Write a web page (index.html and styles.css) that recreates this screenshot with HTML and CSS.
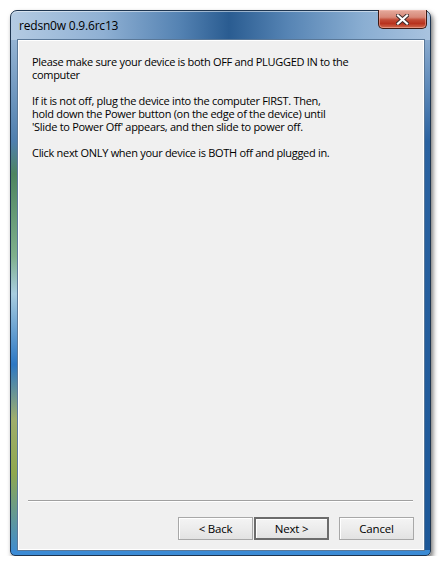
FILE: index.html
```html
<!DOCTYPE html>
<html lang="en">
<head>
    <meta charset="UTF-8">
    <title>redsn0w 0.9.6rc13</title>
    <link rel="stylesheet" href="styles.css">
</head>
<body>
    <div class="window">
        <!-- Title bar -->
        <div class="titlebar">
            <span class="title">redsn0w 0.9.6rc13</span>
            <div class="close-btn">
                <svg width="13" height="11" viewBox="0 0 13 11">
                    <path d="M2 1.5 L11 9.5 M11 1.5 L2 9.5" stroke="#3a2a2a" stroke-width="4" stroke-linecap="square"/>
                    <path d="M2 1.5 L11 9.5 M11 1.5 L2 9.5" stroke="#ffffff" stroke-width="2.2" stroke-linecap="square"/>
                </svg>
            </div>
        </div>

        <!-- Client area -->
        <div class="client">
            <div class="content">
                <p>Please make sure your device is both OFF and PLUGGED IN to the<br>
                computer</p>
                <p>If it is not off, plug the device into the computer FIRST. Then,<br>
                hold down the Power button (on the edge of the device) until<br>
                'Slide to Power Off' appears, and then slide to power off.</p>
                <p>Click next ONLY when your device is BOTH off and plugged in.</p>
            </div>

            <div class="separator"></div>

            <div class="buttons">
                <button class="btn">&lt; Back</button>
                <button class="btn btn-default">Next &gt;</button>
                <button class="btn btn-cancel">Cancel</button>
            </div>
        </div>
    </div>
</body>
</html>
```

FILE: styles.css
```css
/* Base */
:root {
    --client-bg: #f0f0f0;
    --frame-dark: #1e3550;
    --text: #000000;
}

body {
    margin: 0;
    background: #ffffff;
    font-family: 'Open Sans', 'Noto Sans', sans-serif;
    font-size: 11px;
    letter-spacing: -0.3px;
    color: var(--text);
}

/* Window frame */
.window {
    position: relative;
    margin: 10px 0 0 10px;
    width: 408px;
    height: 540px;
    border: 1px solid var(--frame-dark);
    border-radius: 7px 7px 5px 5px;
    padding: 0 5px 4px 6px;
    display: flex;
    flex-direction: column;
    background:
        linear-gradient(90deg, #b4cbe3 0%, #8fb0d3 22%, #5583b3 40%, #2a5c91 52%, #5684b4 66%, #8aaed2 84%, #a9c3df 100%) top / 100% 29px no-repeat,
        linear-gradient(#3b8bd5, #3b8bd5) bottom / 100% 5px no-repeat,
        linear-gradient(180deg, #a9c3de 0%, #4f7fae 24%, #4d8560 30%, #7fb08c 45%, #a8cde0 52%, #2d78c4 65%, #9fae6c 75%, #8fa84f 85%, #3b8bd5 100%) left / 6px 100% no-repeat,
        linear-gradient(180deg, #a6c0dc 0%, #2a62a0 24%, #1d5898 100%);
    box-shadow: 2px 3px 5px rgba(0, 0, 0, 0.55), inset 0 1px 0 rgba(255, 255, 255, 0.5);
}

.titlebar {
    height: 28px;
    display: flex;
    align-items: center;
    padding-left: 2px;
}

.title {
    font-size: 12px;
    letter-spacing: -0.2px;
    color: #000;
    margin-top: 0;
}

.close-btn {
    position: absolute;
    top: -1px;
    right: 3px;
    width: 47px;
    height: 18px;
    border: 1px solid #3d1a14;
    border-top: none;
    border-radius: 0 0 5px 5px;
    background: linear-gradient(180deg, #e4aa9c 0%, #d88878 40%, #c24a35 55%, #b8321e 75%, #d06a4e 100%);
    box-shadow: inset 0 0 0 1px rgba(255, 200, 190, 0.45);
    display: flex;
    justify-content: center;
    align-items: center;
}

/* Client area */
.client {
    flex: 1;
    display: flex;
    flex-direction: column;
    background: var(--client-bg);
    border: 1px solid #5a7898;
    box-shadow: inset 0 0 0 1px #ffffff;
}

.content {
    flex: 1;
    padding: 15px 14px 0 14px;
    line-height: 13px;
}

.content p {
    margin: 0 0 13px 0;
    white-space: nowrap;
}

.separator {
    height: 1px;
    margin: 0 11px 0 10px;
    background: #a0a0a0;
    border-bottom: 1px solid #ffffff;
}

.buttons {
    display: flex;
    justify-content: flex-end;
    padding: 15px 10px 10px 0;
}

.btn {
    width: 75px;
    height: 23px;
    margin: 0;
    font-family: inherit;
    font-size: 11.5px;
    letter-spacing: -0.2px;
    color: #000;
    border: 1px solid #a8a8a8;
    border-radius: 0;
    background: linear-gradient(180deg, #f4f4f4 0%, #ececec 50%, #e2e2e2 100%);
    box-shadow: inset 1px 1px 0 #ffffff;
    padding: 0;
}

.btn-default {
    margin-left: 1px;
    border: 2px solid #6c6c6c;
}

.btn-cancel {
    margin-left: 10px;
}
```
